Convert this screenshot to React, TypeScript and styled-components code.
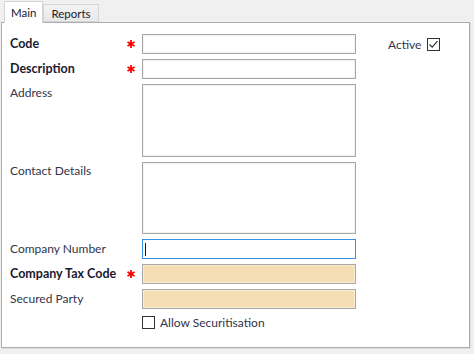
import React from 'react';
import styled, { createGlobalStyle } from 'styled-components';

const GlobalStyle = createGlobalStyle`
  html, body {
    margin: 0;
    padding: 0;
    background: #f0f0f0;
  }
  body {
    font-family: Lato, "Noto Sans", Arial, sans-serif;
    font-size: 12px;
    color: #2b2b3a;
  }
`;

const Window = styled.div`
  width: 474px;
  height: 354px;
  background: #f0f0f0;
  display: flex;
  flex-direction: column;
  padding: 1px 4px 6px 1px;
  box-sizing: border-box;
`;

const TabStrip = styled.div`
  display: flex;
  align-items: flex-end;
  height: 21px;
  padding-left: 3px;
  position: relative;
  z-index: 1;
`;

const Tab = styled.div<{ active?: boolean }>`
  box-sizing: border-box;
  height: ${(p) => (p.active ? '22px' : '18px')};
  margin-bottom: ${(p) => (p.active ? '-1px' : '0')};
  padding: ${(p) => (p.active ? '3px 6px 0 6px' : '1px 7px 0 7px')};
  background: ${(p) => (p.active ? '#ffffff' : 'linear-gradient(#f3f3f3, #e8e8e8)')};
  border: 1px solid #d5d5d5;
  border-bottom: ${(p) => (p.active ? 'none' : '1px solid #d5d5d5')};
  color: #202030;
  font-size: 11.5px;
  line-height: 15px;
`;

const Panel = styled.div`
  flex: 1;
  background: #ffffff;
  border: 1px solid #adadad;
  box-shadow: 1px 1px 0 #dcdcdc;
  padding: 11px 0 0 8px;
  display: flex;
  flex-direction: column;
  gap: 5px;
`;

const Row = styled.div<{ top?: boolean }>`
  display: flex;
  align-items: ${(p) => (p.top ? 'flex-start' : 'center')};
`;

const Label = styled.div<{ bold?: boolean }>`
  width: 117px;
  font-size: ${(p) => (p.bold ? '12.5px' : '12px')};
  font-weight: ${(p) => (p.bold ? 700 : 400)};
  color: ${(p) => (p.bold ? '#1a1a30' : '#33334a')};
  line-height: 16px;
  white-space: nowrap;
`;

const TopLabel = styled(Label)`
  padding-top: 1px;
`;

const Mark = styled.div`
  width: 15px;
  height: 20px;
  display: flex;
  align-items: center;
`;

const Field = styled.div<{ tone?: 'plain' | 'wheat' | 'focus'; tall?: number }>`
  box-sizing: border-box;
  width: 214px;
  height: ${(p) => (p.tall ? `${p.tall}px` : '20px')};
  border: 1px solid ${(p) => (p.tone === 'focus' ? '#3b8ee6' : '#a8a8a8')};
  background: ${(p) => (p.tone === 'wheat' ? '#f5deb3' : '#ffffff')};
  box-shadow: inset 0 0 0 1px ${(p) => (p.tone === 'wheat' ? '#f9ecd4' : p.tone === 'focus' ? '#ffffff' : '#f2f2f2')};
  display: flex;
  align-items: center;
  padding-left: 2px;
`;

const Caret = styled.span`
  display: block;
  width: 1px;
  height: 13px;
  background: #1a1a1a;
`;

const ActiveGroup = styled.div`
  display: flex;
  align-items: center;
  gap: 6px;
  margin-left: 32px;
  color: #33334a;
`;

const CheckRow = styled.div`
  display: flex;
  align-items: center;
  gap: 5px;
  margin: 1px 0 0 132px;
  color: #33334a;
`;

const Box = styled.div`
  box-sizing: border-box;
  width: 13px;
  height: 13px;
  border: 1px solid #333333;
  background: #ffffff;
  display: flex;
  align-items: center;
  justify-content: center;
`;

const Asterisk: React.FC = () => (
  <svg width="8" height="8" viewBox="0 0 8 8">
    <g stroke="#ff0000" strokeWidth="1.8" strokeLinecap="butt">
      <line x1="4" y1="0" x2="4" y2="8" />
      <line x1="0.5" y1="2" x2="7.5" y2="6" />
      <line x1="0.5" y1="6" x2="7.5" y2="2" />
    </g>
  </svg>
);

const Check: React.FC<{ checked?: boolean }> = ({ checked }) => (
  <Box>
    {checked && (
      <svg width="11" height="11" viewBox="0 0 11 11">
        <path d="M1.5 5.5 L4.2 8.2 L9.5 2.2" fill="none" stroke="#333333" strokeWidth="1.2" />
      </svg>
    )}
  </Box>
);

const App: React.FC = () => (
  <>
    <GlobalStyle />
    <Window>
      <TabStrip>
        <Tab active>Main</Tab>
        <Tab>Reports</Tab>
      </TabStrip>
      <Panel>
        <Row>
          <Label bold>Code</Label>
          <Mark>
            <Asterisk />
          </Mark>
          <Field />
          <ActiveGroup>
            Active
            <Check checked />
          </ActiveGroup>
        </Row>
        <Row>
          <Label bold>Description</Label>
          <Mark>
            <Asterisk />
          </Mark>
          <Field />
        </Row>
        <Row top>
          <TopLabel>Address</TopLabel>
          <Mark />
          <Field tall={73} />
        </Row>
        <Row top>
          <TopLabel>Contact Details</TopLabel>
          <Mark />
          <Field tall={72} />
        </Row>
        <Row>
          <Label>Company Number</Label>
          <Mark />
          <Field tone="focus">
            <Caret />
          </Field>
        </Row>
        <Row>
          <Label bold>Company Tax Code</Label>
          <Mark>
            <Asterisk />
          </Mark>
          <Field tone="wheat" />
        </Row>
        <Row>
          <Label>Secured Party</Label>
          <Mark />
          <Field tone="wheat" />
        </Row>
        <CheckRow>
          <Check />
          Allow Securitisation
        </CheckRow>
      </Panel>
    </Window>
  </>
);

export default App;
